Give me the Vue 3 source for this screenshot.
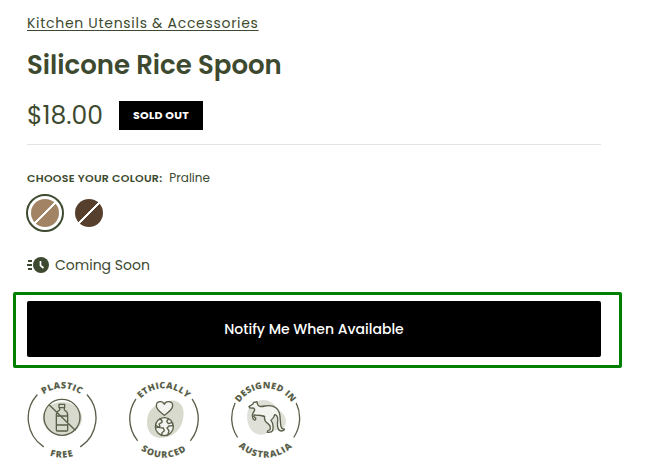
<script setup>
import { ref } from 'vue'

const colours = [
  { name: 'Praline', hex: '#a28465' },
  { name: 'Cocoa', hex: '#56402d' }
]
const selected = ref('Praline')
</script>

<template>
  <main class="product">
    <a class="category" href="#">Kitchen Utensils &amp; Accessories</a>
    <h1>Silicone Rice Spoon</h1>
    <div class="price-row">
      <span class="price">$18.00</span>
      <span class="sold-out">SOLD OUT</span>
    </div>

    <fieldset class="colours">
      <legend><span class="legend-title">CHOOSE YOUR COLOUR:</span><span class="legend-value">{{ selected }}</span></legend>
      <div class="swatches">
        <input
          v-for="c in colours"
          :key="c.name"
          v-model="selected"
          type="radio"
          name="colour"
          class="swatch"
          :value="c.name"
          :aria-label="c.name"
          :style="{ '--fill': c.hex }"
        />
      </div>
    </fieldset>

    <p class="coming">
      <svg width="23" height="16" viewBox="0 0 23 16" aria-hidden="true">
        <circle cx="14" cy="8" r="8" fill="#3d4a2f" />
        <path d="M1 4h4M0 8h5M1 12h4" stroke="#3d4a2f" stroke-width="2" />
        <path d="M13.5 4v4.5l3 2.5" fill="none" stroke="#fff" stroke-width="1.7" />
      </svg>
      <span>Coming Soon</span>
    </p>

    <div class="highlight">
      <button type="button">Notify Me When Available</button>
    </div>

    <div class="badges">
      <svg class="seal" viewBox="18 21 216 252" role="img" aria-label="Plastic free">
        <path id="p-top" class="guide" d="M33 148a93 93 0 0 1 186 0" />
        <path id="p-bottom" class="guide" d="M11 148a115 115 0 0 0 230 0" />
        <path class="ring" d="M51 75A104 104 0 0 0 70 230M202 75A104 104 0 0 1 182 230" />
        <text><textPath href="#p-top" startOffset="50%">PLASTIC</textPath></text>
        <text class="lower"><textPath href="#p-bottom" startOffset="50%">FREE</textPath></text>
        <ellipse cx="127" cy="145" rx="59" ry="49" fill="#d7dacd" />
        <g class="line">
          <circle cx="126" cy="142" r="54" />
          <path d="M117 103h17v10h-17zM119 113v7q-10 5-10 15v45q0 3 3 3h28q3 0 3-3v-45q0-10-10-15v-7M109 138h34M109 165h34M88 105l77 75" />
        </g>
      </svg>

      <svg class="seal" viewBox="24 21 216 252" role="img" aria-label="Ethically sourced">
        <path id="e-top" class="guide" d="M39 148a93 93 0 0 1 186 0" />
        <path id="e-bottom" class="guide" d="M17 148a115 115 0 0 0 230 0" />
        <path class="ring" d="M47 88A104 104 0 0 0 52 211M217 88A104 104 0 0 1 212 211" />
        <text><textPath href="#e-top" startOffset="50%">ETHICALLY</textPath></text>
        <text class="lower"><textPath href="#e-bottom" startOffset="50%">SOURCED</textPath></text>
        <path d="M82 145C86 112 119 94 151 92C181 90 195 111 190 142C186 179 158 205 119 204C91 202 77 177 82 145Z" fill="#d7dacd" />
        <g class="line filled">
          <path d="M133 136C122 127 109 119 109 107C109 93 127 90 133 103C139 90 158 93 158 107C158 119 144 127 133 136Z" />
          <circle cx="133" cy="170" r="27" />
        </g>
        <path class="line" d="M119 147q9 3 7 10l-9 5 3 7-10 4M107 166l11 7 12 1 3 8-7 6-1 8M145 147l-5 7 5 7 11-3M159 167l-12 1-6 6 6 8-3 10" />
      </svg>

      <svg class="seal" viewBox="30 21 216 252" role="img" aria-label="Designed in Australia">
        <path id="d-top" class="guide" d="M44 148a93 93 0 0 1 186 0" />
        <path id="d-bottom" class="guide" d="M22 148a115 115 0 0 0 230 0" />
        <path class="ring" d="M45 100A104 104 0 0 0 52 201M229 100A104 104 0 0 1 222 201" />
        <text><textPath href="#d-top" startOffset="50%">DESIGNED IN</textPath></text>
        <text class="lower"><textPath href="#d-bottom" startOffset="50%">AUSTRALIA</textPath></text>
        <path d="M82 130C86 102 111 87 138 91C158 94 169 113 185 127C208 149 199 181 169 181C151 182 143 195 118 194C91 190 78 159 82 130Z" fill="#dfe1d8" />
        <path class="line filled" d="M87 110L99 102Q100 95 106 97Q112 92 112 101C114 110 123 111 134 108C155 104 172 111 178 128C183 145 179 165 185 174Q188 178 193 177Q194 182 185 183C174 183 171 171 173 153C174 143 170 135 164 134C163 142 157 147 153 151C160 159 161 168 158 182Q155 188 142 187Q141 182 150 179C153 171 149 164 143 160C134 154 132 148 134 139C126 138 121 135 115 136C110 137 107 134 103 135Q99 140 107 144Q108 151 103 150Q95 144 98 132C99 127 104 124 104 119Q103 114 98 114Q89 116 87 110Z" />
      </svg>
    </div>
  </main>
</template>

<style>
body {
  margin: 0;
  background: #fff;
}
</style>

<style scoped>
.product {
  padding: 13px 45px 4px 27px;
  color: #3d4a2f;
  font-family: Poppins, Inter, "Liberation Sans", sans-serif;
  font-size: 14px;
}
.category {
  display: block;
  width: fit-content;
  line-height: 20px;
  letter-spacing: 0.05em;
  color: inherit;
  text-underline-offset: 2px;
}
h1 {
  margin: 12px 0 16px;
  font-size: 26px;
  line-height: 40px;
  font-weight: 600;
}
.price-row {
  display: flex;
  align-items: center;
  gap: 16px;
  padding-bottom: 14px;
  border-bottom: 1px solid #e3e4e1;
}
.price {
  font-size: 25px;
  line-height: 29px;
}
.sold-out {
  padding: 0 14px;
  background: #000;
  color: #fff;
  font-size: 11px;
  font-weight: 700;
  line-height: 29px;
  letter-spacing: 0.025em;
}
.colours {
  margin: 24px 0 0;
  padding: 0;
  border: 0;
}
legend {
  display: flex;
  gap: 7px;
  padding: 0;
  line-height: 18px;
}
.legend-title {
  font-size: 11px;
  font-weight: 600;
  letter-spacing: 0.025em;
}
.legend-value {
  font-size: 12px;
}
.swatches {
  display: flex;
  gap: 6px;
  margin: 7px 0 0 -1px;
}
.swatch {
  appearance: none;
  box-sizing: border-box;
  width: 38px;
  height: 38px;
  margin: 0;
  padding: 3px;
  border: 2px solid transparent;
  border-radius: 50%;
  background: linear-gradient(135deg, var(--fill) calc(50% - 1px), #fff calc(50% - 1px), #fff calc(50% + 1px), var(--fill) calc(50% + 1px)) content-box content-box;
  cursor: pointer;
}
.swatch:checked {
  border-color: #3d4a2f;
}
.coming {
  display: flex;
  align-items: center;
  gap: 5px;
  margin: 23px 0 17px;
  line-height: 20px;
}
.highlight {
  margin: 0 -21px 0 -14px;
  padding: 6px 18px 8px 11px;
  border: 3px solid #008000;
  border-radius: 2px;
}
button {
  display: block;
  width: 100%;
  height: 56px;
  padding: 0;
  border: 0;
  border-radius: 2px;
  background: #000;
  color: #fff;
  font-family: inherit;
  font-size: 14px;
  font-weight: 500;
  cursor: pointer;
}
.badges {
  display: flex;
  gap: 30px;
  margin: 9px 0 0 -1px;
}
.seal {
  width: 72px;
  height: 84px;
}
.seal text {
  fill: #59604a;
  font-family: "Open Sans", sans-serif;
  font-size: 27px;
  font-weight: 800;
  letter-spacing: 1px;
  text-anchor: middle;
}
.seal .lower {
  letter-spacing: 3px;
}
.guide {
  fill: none;
}
.ring,
.line {
  fill: none;
  stroke: #59604a;
  stroke-width: 4;
  stroke-linecap: round;
  stroke-linejoin: round;
}
.filled {
  fill: #f3f4f0;
}
</style>
